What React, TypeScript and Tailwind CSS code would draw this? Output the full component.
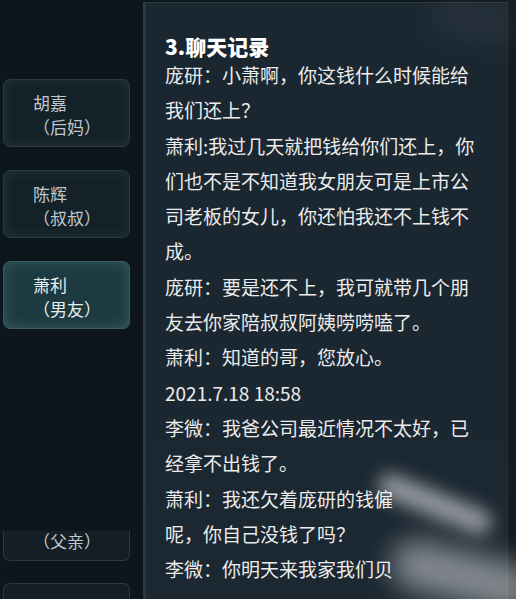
import React from 'react'

const font = { fontFamily: '"Noto Sans CJK SC", "Noto Sans", sans-serif' }

const people = [
  { name: '胡嘉', role: '（后妈）', active: false },
  { name: '陈辉', role: '（叔叔）', active: false },
  { name: '萧利', role: '（男友）', active: true },
]

const lines = [
  '庞研：小萧啊，你这钱什么时候能给',
  '我们还上？',
  '萧利:我过几天就把钱给你们还上，你',
  '们也不是不知道我女朋友可是上市公',
  '司老板的女儿，你还怕我还不上钱不',
  '成。',
  '庞研：要是还不上，我可就带几个朋',
  '友去你家陪叔叔阿姨唠唠嗑了。',
  '萧利：知道的哥，您放心。',
  '2021.7.18 18:58',
  '李微：我爸公司最近情况不太好，已',
  '经拿不出钱了。',
  '萧利：我还欠着庞研的钱僱',
  '呢，你自己没钱了吗？',
  '李微：你明天来我家我们贝',
]

function PersonCard({ name, role, active }: { name: string; role: string; active: boolean }) {
  return (
    <div
      className={`h-[68px] shrink-0 rounded-[7px] border pl-[29px] pt-[11px] text-[17px] leading-[24px] ${
        active
          ? 'border-[#3c5a60] bg-[#1d3a41] text-[#e6eeee] shadow-[inset_0_0_14px_rgba(120,190,190,0.25)]'
          : 'border-[#2a3a42] bg-[#152129] text-[#bfc8cc] shadow-[inset_0_0_12px_rgba(110,160,170,0.15)]'
      }`}
    >
      <div>{name}</div>
      <div>{role}</div>
    </div>
  )
}

export default function App() {
  return (
    <div className="relative flex h-[599px] w-[516px] overflow-hidden bg-[#0e161d]" style={font}>
      {/* 左侧人物列表 */}
      <div className="flex w-[143px] shrink-0 flex-col pl-[3px] pr-[13px] pt-[79px]">
        <div className="flex shrink-0 flex-col gap-[23px]">
          {people.map((p) => (
            <PersonCard key={p.name} {...p} />
          ))}
        </div>
        <div className="mt-[202px] h-[30px] shrink-0 rounded-b-[7px] border border-t-0 border-[#2a3a42] bg-[#131e26] pl-[29px] text-[17px] leading-[20px] text-[#bfc8cc]">
          （父亲）
        </div>
        <div className="mt-[22px] h-[40px] shrink-0 rounded-t-[7px] border border-b-0 border-[#2a3a42] bg-[#131e26]" />
      </div>

      {/* 聊天记录 */}
      <div className="mt-[2px] w-[364px] shrink-0 border-l-[3px] border-t border-l-[#2a3842] border-t-[#2c3a44] bg-gradient-to-b from-[#1a2630] to-[#1b2731] pl-[19px] pt-[32px] text-[#ececec]">
        <div className="text-[21px] font-black leading-[22px] text-white">3.聊天记录</div>
        <div className="text-[19px] leading-[35.3px]">
          {lines.map((l, i) => (
            <div key={i} className="whitespace-nowrap">
              {l}
            </div>
          ))}
        </div>
      </div>
      <div className="flex-1 border-l border-[#24313a] bg-[#121b22]" />

      {/* 水印光斑 */}
      <div className="pointer-events-none absolute left-[375px] top-[492px] h-[24px] w-[120px] rotate-[22deg] rounded-full bg-white/55 blur-[9px]" />
      <div className="pointer-events-none absolute left-[390px] top-[552px] h-[50px] w-[150px] rotate-[14deg] rounded-full bg-white/45 blur-[14px]" />
      <div className="pointer-events-none absolute left-[430px] top-[0px] h-[40px] w-[90px] rotate-[10deg] rounded-full bg-white/5 blur-[12px]" />
    </div>
  )
}
